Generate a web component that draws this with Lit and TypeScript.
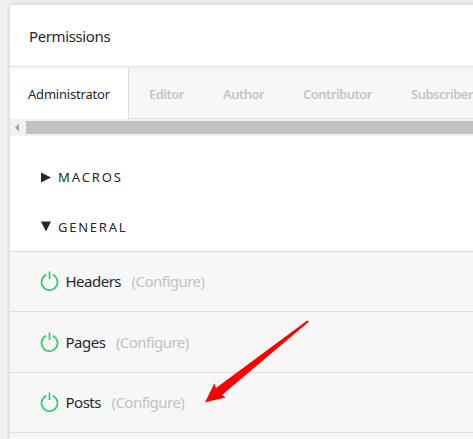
import { LitElement, html, css } from "lit";
import { customElement, property } from "lit/decorators.js";

@customElement("permission-row")
class PermissionRow extends LitElement {
  @property() label = "";
  static styles = css`
    :host {
      display: flex;
      align-items: center;
      box-sizing: border-box;
      height: var(--row-height, 60px);
      padding: 0 0 var(--row-shift, 2px) 30px;
      background: #f7f7f7;
      border-top: 1px solid #dfdfdf;
      font-size: 15px;
      white-space: nowrap;
    }
    svg { width: 19px; height: 20px; margin-right: 6.5px; flex: none; }
    .ring { fill: none; stroke: #2ecc71; stroke-width: 1.7; }
    .label { color: #23282d; letter-spacing: -0.5px; }
    .configure { color: #c2c2c2; margin-left: 10.5px; letter-spacing: -0.53px; }
  `;
  render() {
    return html`
      <svg viewBox="0 0 19 20">
        <path class="ring" d="M6.2 3.8A8 8 0 1 0 12.8 3.8M9.5 0.6V8" />
      </svg>
      <span class="label">${this.label}</span>
      <span class="configure">(Configure)</span>
    `;
  }
}

@customElement("app-root")
class AppRoot extends LitElement {
  static styles = css`
    :host {
      display: block;
      position: relative;
      box-sizing: border-box;
      width: 473px;
      height: 439px;
      padding: 5px 0 0 10px;
      overflow: hidden;
      background: #f0f0f0;
      color: #23282d;
      font-family: "Noto Sans", "Open Sans", sans-serif;
    }
    .card {
      width: 480px;
      height: 440px;
      background: #fff;
      box-shadow: 0 0 5px rgba(0, 0, 0, 0.16);
    }
    .title {
      display: flex;
      align-items: center;
      box-sizing: border-box;
      height: 62px;
      padding: 1px 0 0 19px;
      border-bottom: 1px solid #e1e1e1;
      font-size: 15px;
      letter-spacing: -0.38px;
    }
    .tabs {
      display: flex;
      height: 52px;
      background: linear-gradient(#f0f0f0, #f7f7f7 6px);
      font-size: 13px;
      line-height: 54px;
      white-space: nowrap;
    }
    .tab {
      box-sizing: border-box;
      flex: none;
      padding-left: 20px;
      color: #c5c5c5;
      font-weight: 600;
      border-bottom: 1px solid #dfdfdf;
      letter-spacing: -0.52px;
    }
    .active {
      width: 119px;
      padding-left: 18px;
      background: linear-gradient(#f9f9f9, #fff 6px);
      border-right: 1px solid #dfdfdf;
      border-bottom: 0;
      color: #23282d;
      font-weight: 400;
      letter-spacing: -0.2px;
    }
    .editor { width: 74px; }
    .author { width: 80px; }
    .contributor { width: 108px; }
    .subscriber { width: 100px; }
    .scrollbar {
      display: flex;
      align-items: center;
      height: 17px;
      background: #f1f1f1;
    }
    .scrollbar svg { width: 16px; height: 17px; }
    .arrow-left { fill: #a3a3a3; }
    .thumb { flex: 1; height: 13px; background: #c1c1c1; }
    .sections { height: 115px; box-sizing: border-box; padding-top: 16px; }
    .section {
      display: flex;
      align-items: center;
      height: 50px;
      padding-left: 31px;
      font-size: 13px;
      letter-spacing: 1.9px;
    }
    .general { letter-spacing: 1.75px; }
    .section svg { width: 10px; height: 11px; margin-right: 7px; fill: #23282d; }
    .general svg { margin-bottom: 1px; }
    .pages { --row-height: 61px; --row-shift: 1px; }
    .next { height: 20px; background: #f7f7f7; border-top: 1px solid #dfdfdf; }
    .pointer {
      position: absolute;
      left: 200px;
      top: 315px;
      width: 115px;
      height: 95px;
      fill: #f00;
    }
  `;
  render() {
    return html`
      <div class="card">
        <div class="title"><span>Permissions</span></div>
        <div class="tabs">
          <div class="tab active">Administrator</div>
          <div class="tab editor">Editor</div>
          <div class="tab author">Author</div>
          <div class="tab contributor">Contributor</div>
          <div class="tab subscriber">Subscriber</div>
        </div>
        <div class="scrollbar">
          <svg viewBox="0 0 16 17"><path class="arrow-left" d="M5 8.5L9 4.5V12.5Z" /></svg>
          <div class="thumb"></div>
        </div>
        <div class="sections">
          <div class="section">
            <svg viewBox="0 0 10 11"><path d="M0 0.5L10 5.5L0 10.5Z" /></svg><span>MACROS</span>
          </div>
          <div class="section general">
            <svg viewBox="0 0 10 11"><path d="M0 0.5H10L5 10.5Z" /></svg><span>GENERAL</span>
          </div>
        </div>
        <permission-row label="Headers"></permission-row>
        <permission-row class="pages" label="Pages"></permission-row>
        <permission-row label="Posts"></permission-row>
        <div class="next"></div>
      </div>
      <svg class="pointer" viewBox="200 315 115 95">
        <path d="M205 402.3L214.5 383.3L216 388L307.3 320.5Q309 320.5 308.5 322L222 395L225.8 397.5Z" />
      </svg>
    `;
  }
}
